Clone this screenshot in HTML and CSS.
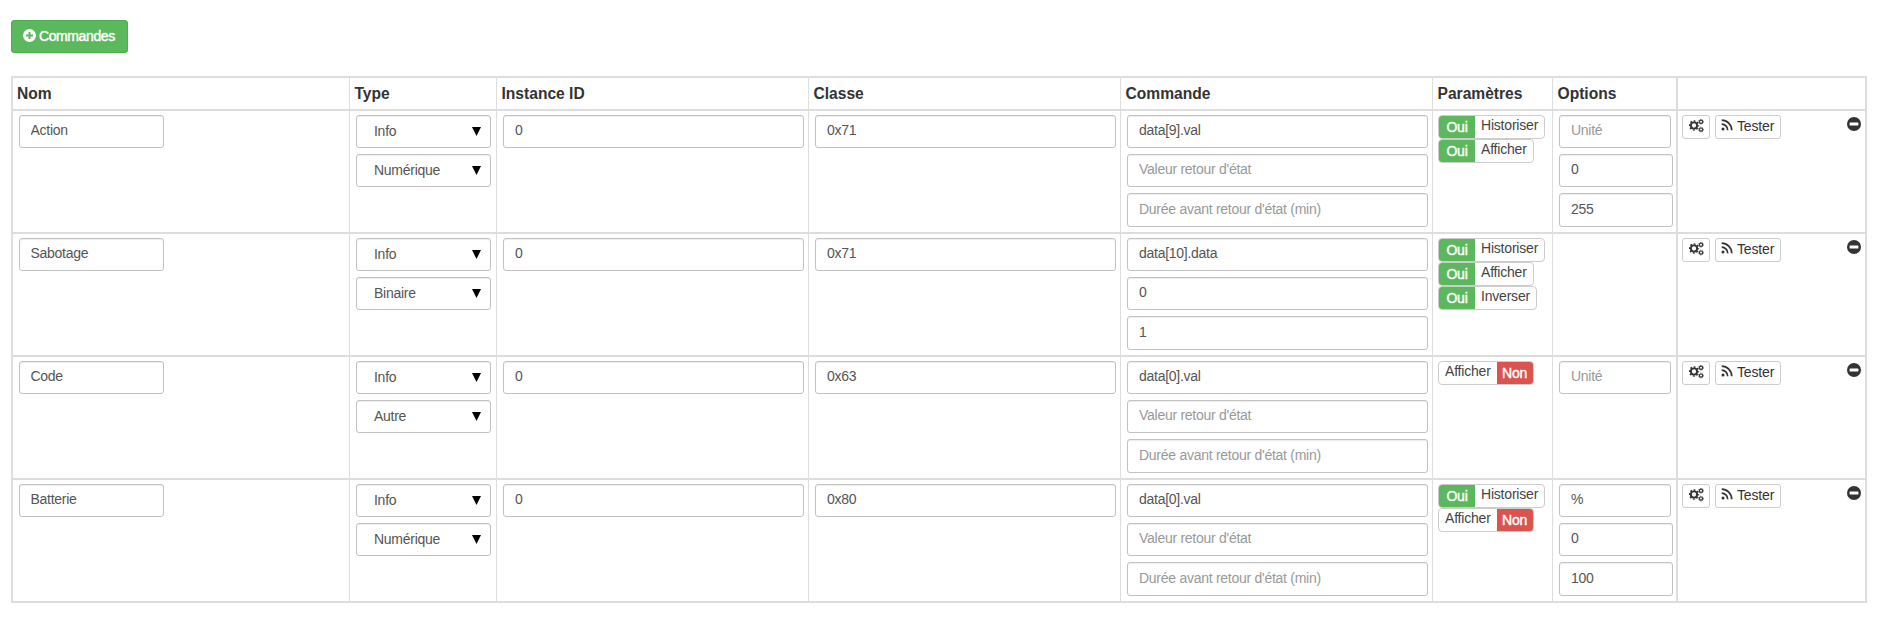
FILE: index.html
```
<!DOCTYPE html>
<html lang="fr">
<head>
<meta charset="utf-8">
<title>Commandes</title>
<link rel="stylesheet" href="styles.css">
</head>
<body>
<svg class="defs" width="0" height="0">
  <symbol id="gears" viewBox="0 0 15 14">
    <circle cx="5" cy="6.5" r="3.1" fill="none" stroke="currentColor" stroke-width="1.9"/>
    <circle cx="5" cy="6.5" r="4.5" fill="none" stroke="currentColor" stroke-width="1.4" stroke-dasharray="1.8 1.734" stroke-dashoffset=".9"/>
    <circle cx="12" cy="2.7" r="1.6" fill="none" stroke="currentColor" stroke-width="1.2"/>
    <circle cx="12" cy="2.7" r="2.4" fill="none" stroke="currentColor" stroke-width=".8" stroke-dasharray="1 .885"/>
    <circle cx="12" cy="10.6" r="1.6" fill="none" stroke="currentColor" stroke-width="1.2"/>
    <circle cx="12" cy="10.6" r="2.4" fill="none" stroke="currentColor" stroke-width=".8" stroke-dasharray="1 .885"/>
  </symbol>
  <symbol id="rss" viewBox="0 0 12 12">
    <circle cx="2" cy="10" r="1.5" fill="currentColor"/>
    <path d="M.7 5.2a6 6 0 0 1 6 6M.7 1.2a10 10 0 0 1 10 10" fill="none" stroke="currentColor" stroke-width="1.7"/>
  </symbol>
  <symbol id="minus" viewBox="0 0 14 14">
    <circle cx="7" cy="7" r="7" fill="currentColor"/>
    <rect x="2.6" y="5.6" width="8.8" height="2.8" rx=".5" fill="#fff"/>
  </symbol>
</svg>
<button class="add"><svg width="13" height="13" viewBox="0 0 13 13"><circle cx="6.5" cy="6.5" r="6.5" fill="#fff"/><path d="M6.5 3v7M3 6.5h7" stroke="#5cb85c" stroke-width="2"/></svg>Commandes</button>
<table class="cmds">
  <colgroup><col class="c-nom"><col class="c-type"><col class="c-wide"><col class="c-wide"><col class="c-wide"><col class="c-param"><col class="c-opt"><col class="c-act"></colgroup>
  <thead><tr><th>Nom</th><th>Type</th><th>Instance ID</th><th>Classe</th><th>Commande</th><th>Paramètres</th><th>Options</th><th></th></tr></thead>
  <tbody id="rows"></tbody>
</table>
<script src="app.js"></script>
</body>
</html>
```

FILE: styles.css
```
* { box-sizing: border-box; }
body {
  margin: 0;
  padding: 20px 0 0 11px;
  background: #fff;
  color: #333;
  font: 14px/20px "Liberation Sans", Arial, sans-serif;
  letter-spacing: -0.27px;
}
.defs { display: block; position: absolute; }
svg { flex: none; }
.add {
  display: flex;
  align-items: center;
  width: 117px;
  height: 33px;
  margin: 0 0 23px;
  padding: 0 0 2px 11px;
  gap: 3px;
  border: 1px solid #4cae4c;
  border-radius: 3px;
  background: #5cb85c;
  color: #fff;
  font: inherit;
  letter-spacing: -0.4px;
  -webkit-text-stroke: 0.4px #fff;
}
.add svg { margin-bottom: 1px; }
.cmds {
  width: 1856px;
  table-layout: fixed;
  border-collapse: separate;
  border-spacing: 0;
  border-top: 2px solid #ddd;
  border-right: 2px solid #ddd;
}
.c-nom { width: 338px; }
.c-type { width: 147px; }
.c-wide { width: 312px; }
.c-param { width: 120px; }
.c-opt { width: 124px; }
.c-act { width: 189px; }
th, td {
  border-left: 1px solid #ddd;
  border-bottom: 2px solid #ddd;
  vertical-align: top;
  text-align: left;
}
th:first-child, td:first-child,
th:last-child, td:last-child { border-left-width: 2px; }
th {
  height: 33px;
  padding: 6px 0 0 4.5px;
  font-size: 15.6px;
  letter-spacing: 0;
}
th:first-child { padding-left: 4px; }
td { height: 123px; padding: 4px 0 0 6px; }
td:nth-child(6) { padding-left: 5px; }
td:last-child { padding-left: 4px; }
.stack { display: flex; flex-direction: column; gap: 6px; }
.field {
  display: block;
  width: 301px;
  height: 33px;
  padding: 0 11px 3px;
  border: 1px solid #c2c2c2;
  border-radius: 3px;
  background: #fff;
  box-shadow: inset 0 1px 1px rgba(0, 0, 0, 0.075);
  color: #555;
  font: inherit;
  letter-spacing: inherit;
}
.field::placeholder { color: #999; opacity: 1; }
.field.third { height: 34px; }
.c-nom-in { width: 145px; padding-left: 10.5px; }
.opt { width: 114px; }
.opt:first-child { width: 112px; }
.select {
  display: flex;
  align-items: center;
  justify-content: space-between;
  width: 135px;
  padding: 0 9px 1px 17px;
}
.switches { display: flex; flex-direction: column; align-items: flex-start; }
.switch {
  display: flex;
  height: 24px;
  border: 1px solid #ccc;
  border-radius: 4px;
  overflow: hidden;
  color: #444;
  line-height: 19px;
  letter-spacing: -0.2px;
}
.on, .off {
  width: 36px;
  padding-top: 2px;
  color: #fff;
  text-align: center;
  -webkit-text-stroke: 0.4px #fff;
}
.on { background: #5cb85c; }
.off { background: #d9534f; }
.on + .txt { padding: 0 6px 0 6px; }
.before { padding: 0 6px; }
.actions { display: flex; padding-right: 4px; }
.btn {
  display: flex;
  align-items: center;
  height: 24px;
  border: 1px solid #ccc;
  border-radius: 3px;
  background: #fff;
  color: #333;
  font: inherit;
  letter-spacing: -0.15px;
}
.gear { width: 28px; padding: 0 0 3px 6px; margin-right: 5px; }
.test { width: 66px; padding: 0 0 2px 5px; gap: 4px; }
.test svg { margin-bottom: 2px; }
.remove { margin: 2px 0 0 auto; }
```

FILE: app.js
```
const rows = [
  { nom: 'Action', type: 'Numérique', classe: '0x71', cmd: ['data[9].val', '', ''], sw: [['Historiser', 1], ['Afficher', 1]], opt: ['', '0', '255'] },
  { nom: 'Sabotage', type: 'Binaire', classe: '0x71', cmd: ['data[10].data', '0', '1'], sw: [['Historiser', 1], ['Afficher', 1], ['Inverser', 1]], opt: [] },
  { nom: 'Code', type: 'Autre', classe: '0x63', cmd: ['data[0].val', '', ''], sw: [['Afficher', 0]], opt: [''] },
  { nom: 'Batterie', type: 'Numérique', classe: '0x80', cmd: ['data[0].val', '', ''], sw: [['Historiser', 1], ['Afficher', 0]], opt: ['%', '0', '100'] }
];
const hints = ['', "Valeur retour d'état", "Durée avant retour d'état (min)"];
const field = (value, cls = '', hint = '') => `<input class="field ${cls}" value="${value}" placeholder="${hint}">`;
const third = i => (i === 2 ? 'third' : '');
const select = v => `<div class="field select">${v}<svg width="9" height="9" viewBox="0 0 9 9"><path d="M0 0h9L4.5 9z"/></svg></div>`;
const toggle = ([name, on]) => on
  ? `<div class="switch"><span class="on">Oui</span><span class="txt">${name}</span></div>`
  : `<div class="switch"><span class="before">${name}</span><span class="off">Non</span></div>`;

document.getElementById('rows').innerHTML = rows.map(r => `<tr>
  <td>${field(r.nom, 'c-nom-in')}</td>
  <td><div class="stack">${select('Info')}${select(r.type)}</div></td>
  <td>${field('0')}</td>
  <td>${field(r.classe)}</td>
  <td><div class="stack">${r.cmd.map((c, i) => field(c, third(i), hints[i])).join('')}</div></td>
  <td><div class="switches">${r.sw.map(toggle).join('')}</div></td>
  <td><div class="stack">${r.opt.map((o, i) => field(o, 'opt ' + third(i), i ? '' : 'Unité')).join('')}</div></td>
  <td><div class="actions"><button class="btn gear"><svg width="15" height="14"><use href="#gears"/></svg></button><button class="btn test"><svg width="12" height="12"><use href="#rss"/></svg>Tester</button><svg class="remove" width="14" height="14"><use href="#minus"/></svg></div></td>
</tr>`).join('');
```
